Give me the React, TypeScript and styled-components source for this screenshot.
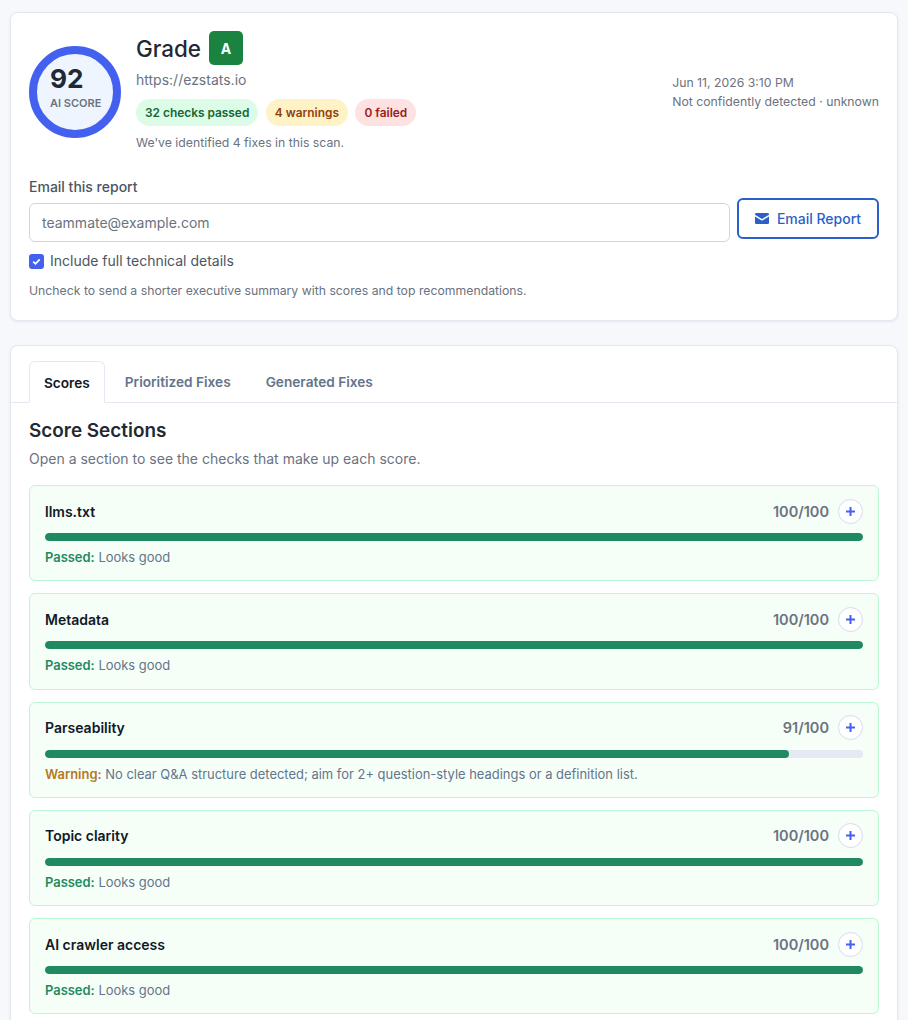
import { createGlobalStyle, styled } from 'styled-components';

const GlobalStyle = createGlobalStyle`
  * {
    box-sizing: border-box;
  }
  html,
  body {
    margin: 0;
    background: #f6f8fc;
    font-family: Inter, 'Liberation Sans', sans-serif;
    color: #1f2933;
  }
`;

const Page = styled.main`
  display: flex;
  flex-direction: column;
  gap: 24px;
  padding: 12px 10px 20px;
`;

const Card = styled.section`
  background: #fff;
  border: 1px solid #e4e8f0;
  border-radius: 8px;
  box-shadow: 0 1px 3px rgba(20, 30, 60, 0.08);
`;

const SummaryCard = styled(Card)`
  padding: 19px 18px 20px;
`;

const SummaryTop = styled.div`
  display: flex;
  align-items: flex-start;
`;

const ScoreRing = styled.div`
  flex: none;
  width: 92px;
  height: 92px;
  margin-top: 14px;
  padding: 9px 0 0 13px;
  border: 8px solid #4361ee;
  border-radius: 50%;
  background: #eff5fe;
`;

const ScoreValue = styled.div`
  font-size: 26.25px;
  line-height: 32px;
  font-weight: 700;
  color: #1f2933;
`;

const ScoreLabel = styled.div`
  margin-top: 1px;
  font-size: 11px;
  line-height: 14px;
  font-weight: 600;
  color: #6b7280;
`;

const SummaryInfo = styled.div`
  flex: 1;
  margin: -1px 0 0 15px;
`;

const GradeRow = styled.div`
  display: flex;
  align-items: center;
  gap: 8px;
  height: 34px;
`;

const GradeTitle = styled.h1`
  margin: 0;
  font-size: 22.4px;
  font-weight: 500;
  color: #1f2933;
`;

const GradeBadge = styled.span`
  width: 34px;
  height: 34px;
  border-radius: 5px;
  background: #1a833f;
  color: #fff;
  font-size: 14px;
  font-weight: 700;
  display: flex;
  align-items: center;
  justify-content: center;
`;

const SiteUrl = styled.div`
  margin-top: 5px;
  font-size: 14px;
  line-height: 20px;
  color: #6b7280;
`;

const Pills = styled.div`
  display: flex;
  gap: 7.5px;
  margin-top: 9px;
`;

const Pill = styled.span<{ $tone: 'good' | 'warn' | 'bad' }>`
  height: 27px;
  padding: 0 9px;
  border-radius: 14px;
  display: flex;
  align-items: center;
  font-size: 11.9px;
  font-weight: 600;
  background: ${(p) => ({ good: '#dcfce7', warn: '#fef3c7', bad: '#fee2e2' })[p.$tone]};
  color: ${(p) => ({ good: '#166534', warn: '#92400e', bad: '#991b1b' })[p.$tone]};
`;

const FixNote = styled.p`
  margin: 9px 0 0;
  font-size: 12.25px;
  line-height: 16px;
  color: #6b7280;
`;

const ScanMeta = styled.div`
  margin-top: 41px;
  font-size: 12.25px;
  line-height: 19px;
  color: #6b7280;
`;

const EmailSection = styled.form`
  margin-top: 26px;
`;

const EmailRow = styled.div`
  display: flex;
  align-items: flex-end;
  gap: 7px;
`;

const EmailField = styled.div`
  flex: 1;
`;

const FieldLabel = styled.label`
  display: block;
  font-size: 14px;
  line-height: 20px;
  font-weight: 500;
  color: #4b5563;
`;

const EmailInput = styled.input`
  display: block;
  width: 100%;
  height: 39px;
  margin-top: 6px;
  padding: 0 12px;
  border: 1px solid #d1d5db;
  border-radius: 6px;
  background: #fff;
  font: 14px Inter, sans-serif;
  &::placeholder {
    color: #6b7280;
    opacity: 1;
  }
`;

const EmailButton = styled.button`
  width: 142px;
  height: 41px;
  margin-bottom: 3px;
  border: 2px solid #2b5fc9;
  border-radius: 6px;
  background: #fff;
  color: #2b5fc9;
  font: 500 14px Inter, sans-serif;
  display: flex;
  align-items: center;
  justify-content: center;
  gap: 8px;
`;

const CheckRow = styled.label`
  display: flex;
  align-items: center;
  gap: 6px;
  margin-top: 9px;
  font-size: 14px;
  line-height: 20px;
  color: #4b5563;
`;

const CheckBox = styled.span`
  width: 15px;
  height: 15px;
  border-radius: 3px;
  background: #4361ee;
  display: flex;
  align-items: center;
  justify-content: center;
`;

const CheckHint = styled.p`
  margin: 11px 0 0;
  font-size: 12.25px;
  line-height: 18px;
  color: #6b7280;
`;

const TabBar = styled.div`
  display: flex;
  gap: 5px;
  padding: 15px 18px 0;
  border-bottom: 1px solid #e4e8f0;
`;

const Tab = styled.button<{ $active?: boolean }>`
  height: ${(p) => (p.$active ? '42px' : '41px')};
  margin-bottom: ${(p) => (p.$active ? '-1px' : '0')};
  padding: ${(p) => (p.$active ? '2px 14px 0' : '0 14px')};
  border: 1px solid ${(p) => (p.$active ? '#e4e8f0' : 'transparent')};
  border-bottom-color: ${(p) => (p.$active ? '#fff' : 'transparent')};
  border-radius: 6px 6px 0 0;
  background: ${(p) => (p.$active ? '#fff' : 'transparent')};
  color: ${(p) => (p.$active ? '#111827' : '#64748b')};
  font: 600 13.65px Inter, sans-serif;
`;

const TabBody = styled.div`
  padding: 16px 18px 20px;
`;

const SectionTitle = styled.h2`
  margin: 0;
  font-size: 18.9px;
  line-height: 24px;
  font-weight: 600;
  color: #1f2933;
`;

const SectionIntro = styled.p`
  margin: 7px 0 0;
  font-size: 14px;
  line-height: 18px;
  color: #6b7280;
`;

const ScoreList = styled.div`
  display: flex;
  flex-direction: column;
  gap: 12px;
  margin-top: 17px;
`;

const ScoreRow = styled.article`
  height: 96.25px;
  padding: 12px 15px;
  border: 1px solid #bbf7d0;
  border-radius: 6px;
  background: #f5fff8;
`;

const RowHeader = styled.div`
  display: flex;
  align-items: center;
  justify-content: space-between;
  height: 26px;
`;

const RowTitle = styled.h3`
  margin: 0;
  font-size: 14px;
  font-weight: 600;
  color: #111827;
`;

const RowScore = styled.div`
  display: flex;
  align-items: center;
  gap: 9px;
  font-size: 14.5px;
  font-weight: 600;
  color: #6b7280;
`;

const ExpandButton = styled.button`
  width: 25px;
  height: 25px;
  padding: 0;
  border: 1px solid #d5dcf0;
  border-radius: 50%;
  background: #fff;
  display: flex;
  align-items: center;
  justify-content: center;
`;

const Track = styled.div`
  height: 8px;
  margin-top: 9px;
  border-radius: 4px;
  background: #e5e9f2;
  overflow: hidden;
`;

const Fill = styled.div`
  height: 100%;
  border-radius: 4px;
  background: #1f8a5f;
`;

const RowNote = styled.p`
  margin: 8px 0 0;
  font-size: 12.95px;
  line-height: 17px;
  color: #64748b;
`;

const NoteLead = styled.strong<{ $warn?: boolean }>`
  font-weight: 600;
  color: ${(p) => (p.$warn ? '#b7791f' : '#1f8a5f')};
`;

const sections = [
  { name: 'llms.txt', score: 100 },
  { name: 'Metadata', score: 100 },
  {
    name: 'Parseability',
    score: 91,
    warning: 'No clear Q&A structure detected; aim for 2+ question-style headings or a definition list.',
  },
  { name: 'Topic clarity', score: 100 },
  { name: 'AI crawler access', score: 100 },
];

function App() {
  return (
    <Page>
      <GlobalStyle />
      <SummaryCard>
        <SummaryTop>
          <ScoreRing>
            <ScoreValue>92</ScoreValue>
            <ScoreLabel>AI SCORE</ScoreLabel>
          </ScoreRing>
          <SummaryInfo>
            <GradeRow>
              <GradeTitle>Grade</GradeTitle>
              <GradeBadge>A</GradeBadge>
            </GradeRow>
            <SiteUrl>https://ezstats.io</SiteUrl>
            <Pills>
              <Pill $tone="good">32 checks passed</Pill>
              <Pill $tone="warn">4 warnings</Pill>
              <Pill $tone="bad">0 failed</Pill>
            </Pills>
            <FixNote>We've identified 4 fixes in this scan.</FixNote>
          </SummaryInfo>
          <ScanMeta>
            <div>Jun 11, 2026 3:10 PM</div>
            <div>Not confidently detected · unknown</div>
          </ScanMeta>
        </SummaryTop>
        <EmailSection>
          <EmailRow>
            <EmailField>
              <FieldLabel>Email this report</FieldLabel>
              <EmailInput placeholder="teammate@example.com" />
            </EmailField>
            <EmailButton type="button">
              <svg width="14" height="11" viewBox="0 0 14 11" aria-hidden="true">
                <path
                  fill="#2b5fc9"
                  d="M1.3 0h11.4C13.4 0 14 .6 14 1.3v.5L7 6 0 1.8v-.5C0 .6.6 0 1.3 0zM0 3.4l6.6 4c.3.1.5.1.8 0l6.6-4v6.3c0 .7-.6 1.3-1.3 1.3H1.3C.6 11 0 10.4 0 9.7z"
                />
              </svg>
              Email Report
            </EmailButton>
          </EmailRow>
          <CheckRow>
            <CheckBox>
              <svg width="11" height="11" viewBox="0 0 11 11" aria-hidden="true">
                <path d="M2.2 5.6l2.3 2.2 4.2-4.5" fill="none" stroke="#fff" strokeWidth="1.8" />
              </svg>
            </CheckBox>
            Include full technical details
          </CheckRow>
          <CheckHint>Uncheck to send a shorter executive summary with scores and top recommendations.</CheckHint>
        </EmailSection>
      </SummaryCard>
      <Card>
        <TabBar>
          <Tab $active>Scores</Tab>
          <Tab>Prioritized Fixes</Tab>
          <Tab>Generated Fixes</Tab>
        </TabBar>
        <TabBody>
          <SectionTitle>Score Sections</SectionTitle>
          <SectionIntro>Open a section to see the checks that make up each score.</SectionIntro>
          <ScoreList>
            {sections.map((s) => (
              <ScoreRow key={s.name}>
                <RowHeader>
                  <RowTitle>{s.name}</RowTitle>
                  <RowScore>
                    {s.score}/100
                    <ExpandButton type="button" aria-label={`Expand ${s.name}`}>
                      <svg width="9" height="9" viewBox="0 0 9 9" aria-hidden="true">
                        <path d="M4.5 0v9M0 4.5h9" stroke="#4361ee" strokeWidth="2" />
                      </svg>
                    </ExpandButton>
                  </RowScore>
                </RowHeader>
                <Track>
                  <Fill style={{ width: `${s.score}%` }} />
                </Track>
                <RowNote>
                  {s.warning ? <NoteLead $warn>Warning:</NoteLead> : <NoteLead>Passed:</NoteLead>}{' '}
                  {s.warning ?? 'Looks good'}
                </RowNote>
              </ScoreRow>
            ))}
          </ScoreList>
        </TabBody>
      </Card>
    </Page>
  );
}

export default App;
